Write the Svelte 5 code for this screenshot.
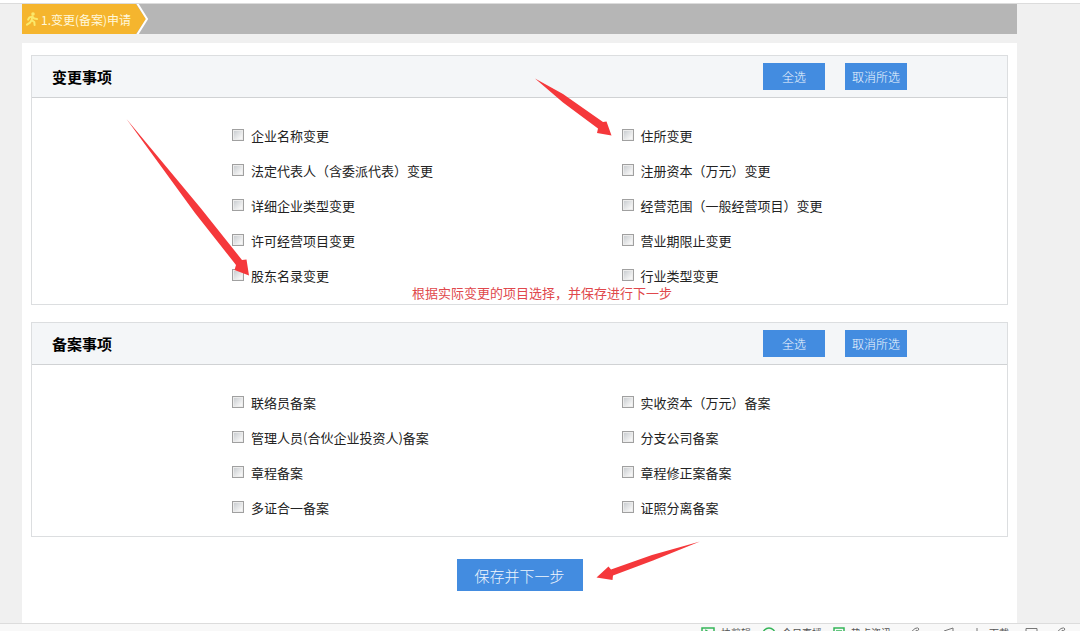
<script lang="ts">
  type Section = {
    id: string;
    title: string;
    items: string[];
    note?: string;
  };

  const sections: Section[] = [
    {
      id: 'change',
      title: '变更事项',
      items: [
        '企业名称变更',
        '住所变更',
        '法定代表人（含委派代表）变更',
        '注册资本（万元）变更',
        '详细企业类型变更',
        '经营范围（一般经营项目）变更',
        '许可经营项目变更',
        '营业期限止变更',
        '股东名录变更',
        '行业类型变更'
      ],
      note: '根据实际变更的项目选择，并保存进行下一步'
    },
    {
      id: 'record',
      title: '备案事项',
      items: [
        '联络员备案',
        '实收资本（万元）备案',
        '管理人员(合伙企业投资人)备案',
        '分支公司备案',
        '章程备案',
        '章程修正案备案',
        '多证合一备案',
        '证照分离备案'
      ]
    }
  ];

  let checked: Record<string, boolean[]> = $state({
    change: Array(10).fill(false),
    record: Array(8).fill(false)
  });

  function setAll(id: string, value: boolean) {
    checked[id] = checked[id].map(() => value);
  }
</script>

<div class="page">
  <div class="topline"></div>

  <main>
    <div class="steps">
      <div class="step">
        <svg class="walker" width="12" height="14" viewBox="0 0 12 14" aria-hidden="true">
          <circle cx="7" cy="2" r="1.8" />
          <path d="M6.3 4.3 5.6 8.2 8.3 10 8.6 13M5.6 8.2 4 10.6 1 12.6M6.2 4.6 3.4 5.4 2.2 7.6M6.8 4.8 8.2 6.6 11 7" />
        </svg>
        <span>1.变更(备案)申请</span>
      </div>
      <svg class="chevron" width="13" height="30" viewBox="0 0 13 30" aria-hidden="true">
        <path class="fill" d="M0 0 10 15 0 30Z" />
        <path class="edge" d="M1 -1 11 15 1 31" />
      </svg>
    </div>

    <div class="panel">
      {#each sections as section (section.id)}
        <section class="box">
          <header>
            <h2>{section.title}</h2>
            <button type="button" onclick={() => setAll(section.id, true)}>全选</button>
            <button type="button" onclick={() => setAll(section.id, false)}>取消所选</button>
          </header>
          <div class="options">
            {#each section.items as item, i}
              <label>
                <input type="checkbox" bind:checked={checked[section.id][i]} />
                <span>{item}</span>
              </label>
            {/each}
          </div>
          {#if section.note}
            <p class="note">{section.note}</p>
          {/if}
        </section>
      {/each}

      <button type="button" class="save">保存并下一步</button>
    </div>
  </main>

  <footer>
    <svg class="green" width="14" height="12" viewBox="0 0 14 12" aria-hidden="true">
      <path d="M1 1H13V11H1ZM5 3.5 9 6 5 8.5Z" />
    </svg>
    <span>快剪辑</span>
    <svg class="green next" width="14" height="12" viewBox="0 0 14 12" aria-hidden="true">
      <circle cx="7" cy="7" r="6" />
    </svg>
    <span>今日直播</span>
    <svg class="green next" width="12" height="12" viewBox="0 0 12 12" aria-hidden="true">
      <path d="M1 1H11V11H1ZM3 4H9M3 7H9" />
    </svg>
    <span>热点资讯</span>
    <svg class="tools" width="76" height="12" viewBox="0 0 76 12" aria-hidden="true">
      <path d="M3 6 8 1.5Q11 0 12 2L7 8M5 7 10 3M37 4 46 1V10L37 7ZM70 1V9M67 6 70 9 73 6" />
    </svg>
    <span>下载</span>
    <svg class="tools" width="44" height="12" viewBox="0 0 44 12" aria-hidden="true">
      <path d="M1 1.5H12V10H1ZM31 6 36 1.5Q39 0 40 2L35 8M33 7 38 3" />
    </svg>
  </footer>

  <!-- pointers to the items that need attention -->
  <svg class="arrows" width="1080" height="631" viewBox="0 0 1080 631" aria-hidden="true">
    <path d="M126.5 119 201 208.5 242 260 246.5 259.5 249 275.5 234.500 270 236 265 195 213Z" />
    <path d="M535 78.5 563 94 603 122 606.5 121.5 611.5 135.5 597 133 598 128.500 563 102.500Z" />
    <path d="M700 541.5 653 560.5 613 575.5 612.5 580 596.5 577.5 608.5 566.5 611 569.5 652 555Z" />
  </svg>
</div>

<style>
  :global(body) {
    background: #f0f0f0;
  }

  .page {
    position: relative;
    display: flex;
    flex-direction: column;
    min-height: 100vh;
    overflow: hidden;
    font-family: 'Noto Sans CJK SC', sans-serif;
    font-size: 13px;
    color: #222;
  }

  .topline {
    height: 3px;
    background: #fff;
    border-bottom: 1px solid #dcdcdc;
  }

  main {
    flex: 1 0 auto;
    display: flex;
    flex-direction: column;
    padding: 0 63px 0 22px;
  }

  .steps {
    display: flex;
    height: 30px;
    margin-bottom: 9px;
    background: #b6b6b6;
  }

  .step {
    display: flex;
    align-items: center;
    gap: 3px;
    padding: 0 5px 0 4px;
    background: #f5b52e;
    color: #fff8dc;
    font-size: 12px;
  }

  .walker {
    fill: #fbe96b;
  }

  .walker path {
    fill: none;
    stroke: #fbe96b;
    stroke-width: 2;
    stroke-linejoin: round;
    stroke-linecap: round;
  }

  .chevron .fill {
    fill: #f5b52e;
  }

  .chevron .edge {
    fill: none;
    stroke: #fff;
    stroke-width: 2;
  }

  .panel {
    flex: 1 0 auto;
    display: flex;
    flex-direction: column;
    gap: 17px;
    padding: 12px 9px 32px;
    background: #fff;
  }

  .box {
    position: relative;
    border: 1px solid #dcdee0;
  }

  header {
    display: flex;
    align-items: center;
    gap: 20px;
    height: 41px;
    padding: 0 100px 0 20px;
    background: #f4f6f8;
    border-bottom: 1px solid #d0d2d4;
  }

  h2 {
    flex: 1;
    margin: 0;
    font-size: 15px;
    font-weight: 700;
    color: #000;
  }

  button {
    width: 62px;
    height: 27px;
    padding: 0;
    border: 0;
    background: #438ce0;
    color: #f0f6fd;
    font-family: inherit;
    font-size: 12px;
    font-weight: 300;
    cursor: pointer;
  }

  .options {
    display: grid;
    grid-template-columns: 1fr 1fr;
    column-gap: 4px;
    padding: 20px 0 11px 200px;
  }

  label {
    display: flex;
    align-items: center;
    gap: 7px;
    height: 35px;
  }

  input {
    appearance: none;
    width: 12px;
    height: 12px;
    margin: 0 0 2px;
    border: 1px solid #a0a0a0;
    background: linear-gradient(135deg, #c4c8cc, #f6f6f6 80%);
    box-shadow: inset 0 0 0 1px #ececec;
  }

  input:checked {
    background: #438ce0;
  }

  .note {
    position: absolute;
    left: 380px;
    bottom: 0;
    margin: 0;
    line-height: 22px;
    color: #e0484c;
  }

  .save {
    align-self: center;
    width: 126px;
    height: 32px;
    margin-top: 5px;
    font-size: 15px;
  }

  footer {
    flex: none;
    display: flex;
    align-items: flex-start;
    justify-content: flex-end;
    height: 8px;
    padding: 3px 11px 0 0;
    box-sizing: border-box;
    overflow: hidden;
    background: #f8f8f8;
    border-top: 1px solid #dcdcdc;
    font-size: 10px;
    line-height: 12px;
    color: #555;
    white-space: nowrap;
  }

  footer svg {
    flex: none;
    fill: none;
    stroke: #777;
  }

  footer span {
    margin-left: 6px;
  }

  footer .green {
    stroke: #35b558;
    stroke-width: 1.5;
  }

  footer .next {
    margin-left: 11px;
  }

  footer .tools {
    margin-left: 16px;
  }

  .arrows {
    position: absolute;
    top: 0;
    left: 0;
    pointer-events: none;
    fill: #f5383b;
  }
</style>
